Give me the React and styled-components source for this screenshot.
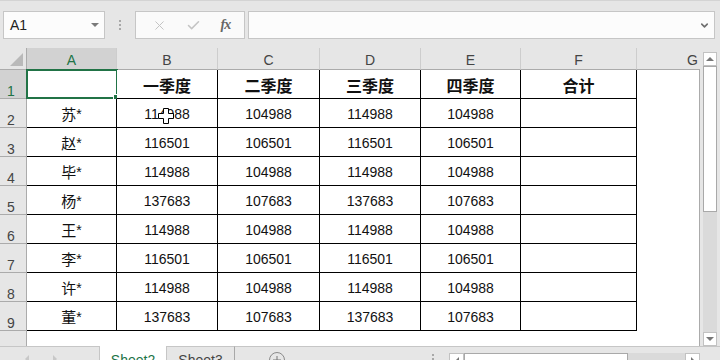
import React from "react";
import styled, { createGlobalStyle } from "styled-components";
import { X, Check, ChevronDown } from "lucide-react";

const GlobalStyle = createGlobalStyle`
  html, body {
    margin: 0;
    padding: 0;
  }
  body {
    width: 720px;
    height: 360px;
    overflow: hidden;
    background: #e6e6e6;
    font-family: "Liberation Sans", "Noto Sans CJK SC", sans-serif;
  }
  * {
    box-sizing: border-box;
  }
`;

const green = "#217346";

const columns = [
  { key: "A", width: 90 },
  { key: "B", width: 101 },
  { key: "C", width: 102 },
  { key: "D", width: 101 },
  { key: "E", width: 100 },
  { key: "F", width: 116 },
  { key: "G", width: 63 },
];

const header = ["", "一季度", "二季度", "三季度", "四季度", "合计"];

const people = [
  ["苏*", "114988", "104988", "114988", "104988"],
  ["赵*", "116501", "106501", "116501", "106501"],
  ["毕*", "114988", "104988", "114988", "104988"],
  ["杨*", "137683", "107683", "137683", "107683"],
  ["王*", "114988", "104988", "114988", "104988"],
  ["李*", "116501", "106501", "116501", "106501"],
  ["许*", "114988", "104988", "114988", "104988"],
  ["董*", "137683", "107683", "137683", "107683"],
];

const Page = styled.div`
  width: 720px;
  height: 360px;
  overflow: hidden;
  display: flex;
  flex-direction: column;
`;

/* ---------- formula bar ---------- */

const FormulaBar = styled.div`
  height: 48px;
  flex: none;
  display: flex;
  align-items: flex-start;
  padding-top: 10px;
  border-top: 1px solid #d4d4d4;
  background: #e6e6e6;
`;

const InputBox = styled.div`
  height: 28px;
  width: ${(p) => p.$width}px;
  margin-left: ${(p) => p.$ml || 0}px;
  background: #fcfcfc;
  border: 1px solid #c6c6c6;
  display: flex;
  align-items: center;
  position: relative;
`;

const NameText = styled.span`
  font-size: 14px;
  color: #222;
  padding-left: 6px;
  flex: 1;
`;

const DropTri = styled.span`
  width: 0;
  height: 0;
  border-left: 4px solid transparent;
  border-right: 4px solid transparent;
  border-top: 4px solid #7a7a7a;
  margin-right: 5px;
`;

const VDots = styled.div`
  width: 30px;
  height: 28px;
  display: flex;
  flex-direction: column;
  align-items: center;
  justify-content: center;
  gap: 2px;
  span {
    width: 2px;
    height: 2px;
    background: #a8a8a8;
  }
`;

const FxButtons = styled.div`
  flex: 1;
  display: flex;
  align-items: center;
  justify-content: space-around;
  padding: 0 4px 0 6px;
`;

const FxText = styled.span`
  font-family: "Liberation Serif", serif;
  font-style: italic;
  font-weight: bold;
  font-size: 14px;
  color: #666;
  letter-spacing: -1px;
`;

const ChevronWrap = styled.span`
  position: absolute;
  right: 4px;
  top: 8px;
  display: flex;
`;

/* ---------- sheet ---------- */

const Sheet = styled.div`
  height: 298px;
  flex: none;
  display: flex;
`;

const GridWrap = styled.div`
  width: 700px;
  display: flex;
  flex-direction: column;
`;

const Grid = styled.div`
  display: grid;
  grid-template-columns: 27px ${columns.map((c) => c.width + "px").join(" ")};
  grid-template-rows: 22px repeat(9, 29px);
  background: #fff;
`;

const Corner = styled.div`
  background: #e6e6e6;
  border-right: 1px solid #ababab;
  border-bottom: 1px solid #ababab;
  display: flex;
  align-items: flex-end;
  justify-content: flex-end;
  padding: 0 3px 3px 0;
  &::after {
    content: "";
    width: 0;
    height: 0;
    border-left: 13px solid transparent;
    border-bottom: 13px solid #b9b9b9;
  }
`;

const ColHead = styled.div`
  background: ${(p) => (p.$active ? "#d2d2d2" : "#e6e6e6")};
  color: ${(p) => (p.$active ? green : "#444")};
  border-right: ${(p) => (p.$last ? "none" : "1px solid #cdcdcd")};
  border-bottom: 1px solid #ababab;
  display: flex;
  align-items: flex-end;
  justify-content: ${(p) => (p.$last ? "flex-end" : "center")};
  padding: 0 ${(p) => (p.$last ? 2 : 0)}px 1px 0;
  font-size: 14px;
  line-height: 16px;
`;

const RowHead = styled.div`
  background: ${(p) => (p.$active ? "#d2d2d2" : "#e6e6e6")};
  color: ${(p) => (p.$active ? green : "#444")};
  border-right: 1px solid #ababab;
  border-bottom: 1px solid #ababab;
  display: flex;
  align-items: flex-end;
  justify-content: center;
  padding-right: 4px;
  font-size: 14px;
  line-height: 14px;
`;

const Cell = styled.div`
  position: relative;
  background: #fff;
  border-right: 1px solid ${(p) => (p.$plain ? "#ababab" : "#000")};
  border-bottom: ${(p) => (p.$plain ? "none" : "1px solid #000")};
  display: flex;
  align-items: center;
  justify-content: center;
  color: #111;
  font-size: ${(p) => (p.$bold ? 16 : p.$cjk ? 15 : 14)}px;
  font-weight: ${(p) => (p.$bold ? 700 : 400)};
  font-family: ${(p) =>
    p.$bold || p.$cjk
      ? '"Noto Sans CJK SC", sans-serif'
      : '"Liberation Sans", "Noto Sans CJK SC", sans-serif'};
  line-height: 18px;
  padding-top: 1px;
`;

const NameStar = styled.span`
  font-family: "Liberation Sans", sans-serif;
  font-size: 14px;
`;

const Selection = styled.div`
  position: absolute;
  left: -1px;
  top: -1px;
  width: 92px;
  height: 30px;
  border: 2px solid ${green};
  pointer-events: none;
  &::after {
    content: "";
    position: absolute;
    right: -4px;
    bottom: -4px;
    width: 6px;
    height: 6px;
    background: ${green};
    outline: 1px solid #fff;
  }
`;

const Cursor = styled.svg`
  position: absolute;
  left: 40px;
  top: 8px;
`;

const Filler = styled.div`
  flex: 1;
  display: flex;
`;

const FillerHead = styled.div`
  width: 27px;
  background: #e6e6e6;
  border-right: 1px solid #ababab;
`;

const FillerBody = styled.div`
  flex: 1;
  background: #fff;
  border-right: 1px solid #ababab;
`;

const VScroll = styled.div`
  width: 20px;
  display: flex;
  flex-direction: column;
  padding: 4px 3px 0;
  background: #e6e6e6;
`;

const ScrollBtn = styled.div`
  width: ${(p) => p.$w || 14}px;
  height: ${(p) => p.$h || 14}px;
  flex: none;
  background: #fff;
  border: 1px solid #c2c2c2;
  display: flex;
  align-items: center;
  justify-content: center;
`;

const Tri = styled.span`
  width: 0;
  height: 0;
  ${(p) =>
    p.$dir === "up"
      ? "border-left:4px solid transparent;border-right:4px solid transparent;border-bottom:4px solid #777;"
      : p.$dir === "down"
      ? "border-left:4px solid transparent;border-right:4px solid transparent;border-top:4px solid #777;"
      : p.$dir === "left"
      ? "border-top:4px solid transparent;border-bottom:4px solid transparent;border-right:4px solid " +
        (p.$color || "#777") +
        ";"
      : "border-top:4px solid transparent;border-bottom:4px solid transparent;border-left:4px solid " +
        (p.$color || "#777") +
        ";"}
`;

const Thumb = styled.div`
  width: ${(p) => p.$w || 14}px;
  height: ${(p) => p.$h || 14}px;
  flex: none;
  background: #fff;
  border: 1px solid #a9a9a9;
`;

const Track = styled.div`
  flex: 1;
  background: #dadada;
`;

/* ---------- tab bar ---------- */

const TabBar = styled.div`
  height: 30px;
  flex: none;
  display: flex;
  background: #e6e6e6;
  font-size: 14px;
  line-height: 16px;
`;

const TopLined = styled.div`
  width: ${(p) => p.$w}px;
  flex: none;
  border-top: 1px solid #c6c6c6;
  display: flex;
`;

const Nav = styled(TopLined)`
  align-items: flex-start;
  padding: 8px 0 0 25px;
  gap: 24px;
`;

const Tab = styled.div`
  width: 68px;
  flex: none;
  text-align: center;
  padding-top: ${(p) => (p.$active ? 6 : 5)}px;
  background: ${(p) => (p.$active ? "#fff" : "transparent")};
  color: ${(p) => (p.$active ? green : "#444")};
  border-top: ${(p) => (p.$active ? "none" : "1px solid #c6c6c6")};
  border-left: ${(p) => (p.$active ? "1px solid #c6c6c6" : "none")};
  border-right: 1px solid ${(p) => (p.$active ? "#c6c6c6" : "#a8a8a8")};
`;

const AddArea = styled(TopLined)`
  padding: 5px 0 0 34px;
`;

const AddCircle = styled.div`
  width: 16px;
  height: 16px;
  border-radius: 50%;
  border: 1px solid #8a8a8a;
  position: relative;
  &::before,
  &::after {
    content: "";
    position: absolute;
    background: #777;
    left: 50%;
    top: 50%;
    transform: translate(-50%, -50%);
  }
  &::before {
    width: 8px;
    height: 1px;
  }
  &::after {
    width: 1px;
    height: 8px;
  }
`;

const HDots = styled(TopLined)`
  padding: 7px 0 0 7px;
  flex-direction: column;
  gap: 2px;
  span {
    width: 2px;
    height: 2px;
    background: #a8a8a8;
  }
`;

const HScrollArea = styled(TopLined)`
  padding-top: 6px;
  align-items: flex-start;
`;

const HScroll = styled.div`
  display: flex;
  height: 16px;
`;

const nums = [1, 2, 3, 4, 5, 6, 7, 8, 9];

export default function App() {
  return (
    <Page>
      <GlobalStyle />
      <FormulaBar>
        <InputBox $width={102} $ml={3}>
          <NameText>A1</NameText>
          <DropTri />
        </InputBox>
        <VDots>
          <span />
          <span />
          <span />
        </VDots>
        <InputBox $width={110} style={{ background: "#fafafa" }}>
          <FxButtons>
            <X size={15} color="#c4c4c4" strokeWidth={1.6} />
            <Check size={15} color="#c4c4c4" strokeWidth={2.4} />
            <FxText>fx</FxText>
          </FxButtons>
        </InputBox>
        <InputBox $width={467} $ml={3}>
          <ChevronWrap>
            <ChevronDown size={11} color="#6f6f6f" strokeWidth={3.5} />
          </ChevronWrap>
        </InputBox>
      </FormulaBar>

      <Sheet>
        <GridWrap>
          <Grid>
            <Corner />
            {columns.map((c, i) => (
              <ColHead key={c.key} $active={i === 0} $last={i === columns.length - 1}>
                {c.key}
              </ColHead>
            ))}

            <RowHead $active>1</RowHead>
            {header.map((h, i) => (
              <Cell key={"h" + i} $bold>
                {h}
                {i === 0 && <Selection />}
              </Cell>
            ))}
            <Cell $plain />

            {people.map((row, r) => (
              <React.Fragment key={row[0]}>
                <RowHead>{nums[r + 1]}</RowHead>
                <Cell $cjk>
                  {row[0].slice(0, 1)}
                  <NameStar>*</NameStar>
                </Cell>
                {row.slice(1).map((v, i) => (
                  <Cell key={i}>
                    {v}
                    {r === 0 && i === 0 && (
                      <Cursor width="18" height="18" viewBox="0 0 18 18">
                        <path
                          d="M6.5 1.5 H11.5 V6.5 H16.5 V11.5 H11.5 V16.5 H6.5 V11.5 H1.5 V6.5 H6.5 Z"
                          fill="#fff"
                          stroke="#000"
                          strokeWidth="1"
                        />
                      </Cursor>
                    )}
                  </Cell>
                ))}
                <Cell />
                <Cell $plain />
              </React.Fragment>
            ))}
          </Grid>
          <Filler>
            <FillerHead />
            <FillerBody />
          </Filler>
        </GridWrap>
        <VScroll>
          <ScrollBtn>
            <Tri $dir="up" />
          </ScrollBtn>
          <Thumb $h={146} />
          <Track />
          <ScrollBtn>
            <Tri $dir="down" />
          </ScrollBtn>
        </VScroll>
      </Sheet>

      <TabBar>
        <Nav $w={99}>
          <Tri $dir="left" $color="#c8c8c8" />
          <Tri $dir="right" $color="#c8c8c8" />
        </Nav>
        <Tab $active>Sheet2</Tab>
        <Tab>Sheet3</Tab>
        <AddArea $w={190}>
          <AddCircle />
        </AddArea>
        <HDots $w={24}>
          <span />
          <span />
          <span />
        </HDots>
        <HScrollArea $w={251}>
          <HScroll>
            <ScrollBtn $w={15} $h={16}>
              <Tri $dir="left" />
            </ScrollBtn>
            <Thumb $w={164} $h={16} />
            <Track style={{ width: 57, flex: "none" }} />
            <ScrollBtn $w={15} $h={16}>
              <Tri $dir="right" />
            </ScrollBtn>
          </HScroll>
        </HScrollArea>
        <TopLined $w={20} />
      </TabBar>
    </Page>
  );
}
